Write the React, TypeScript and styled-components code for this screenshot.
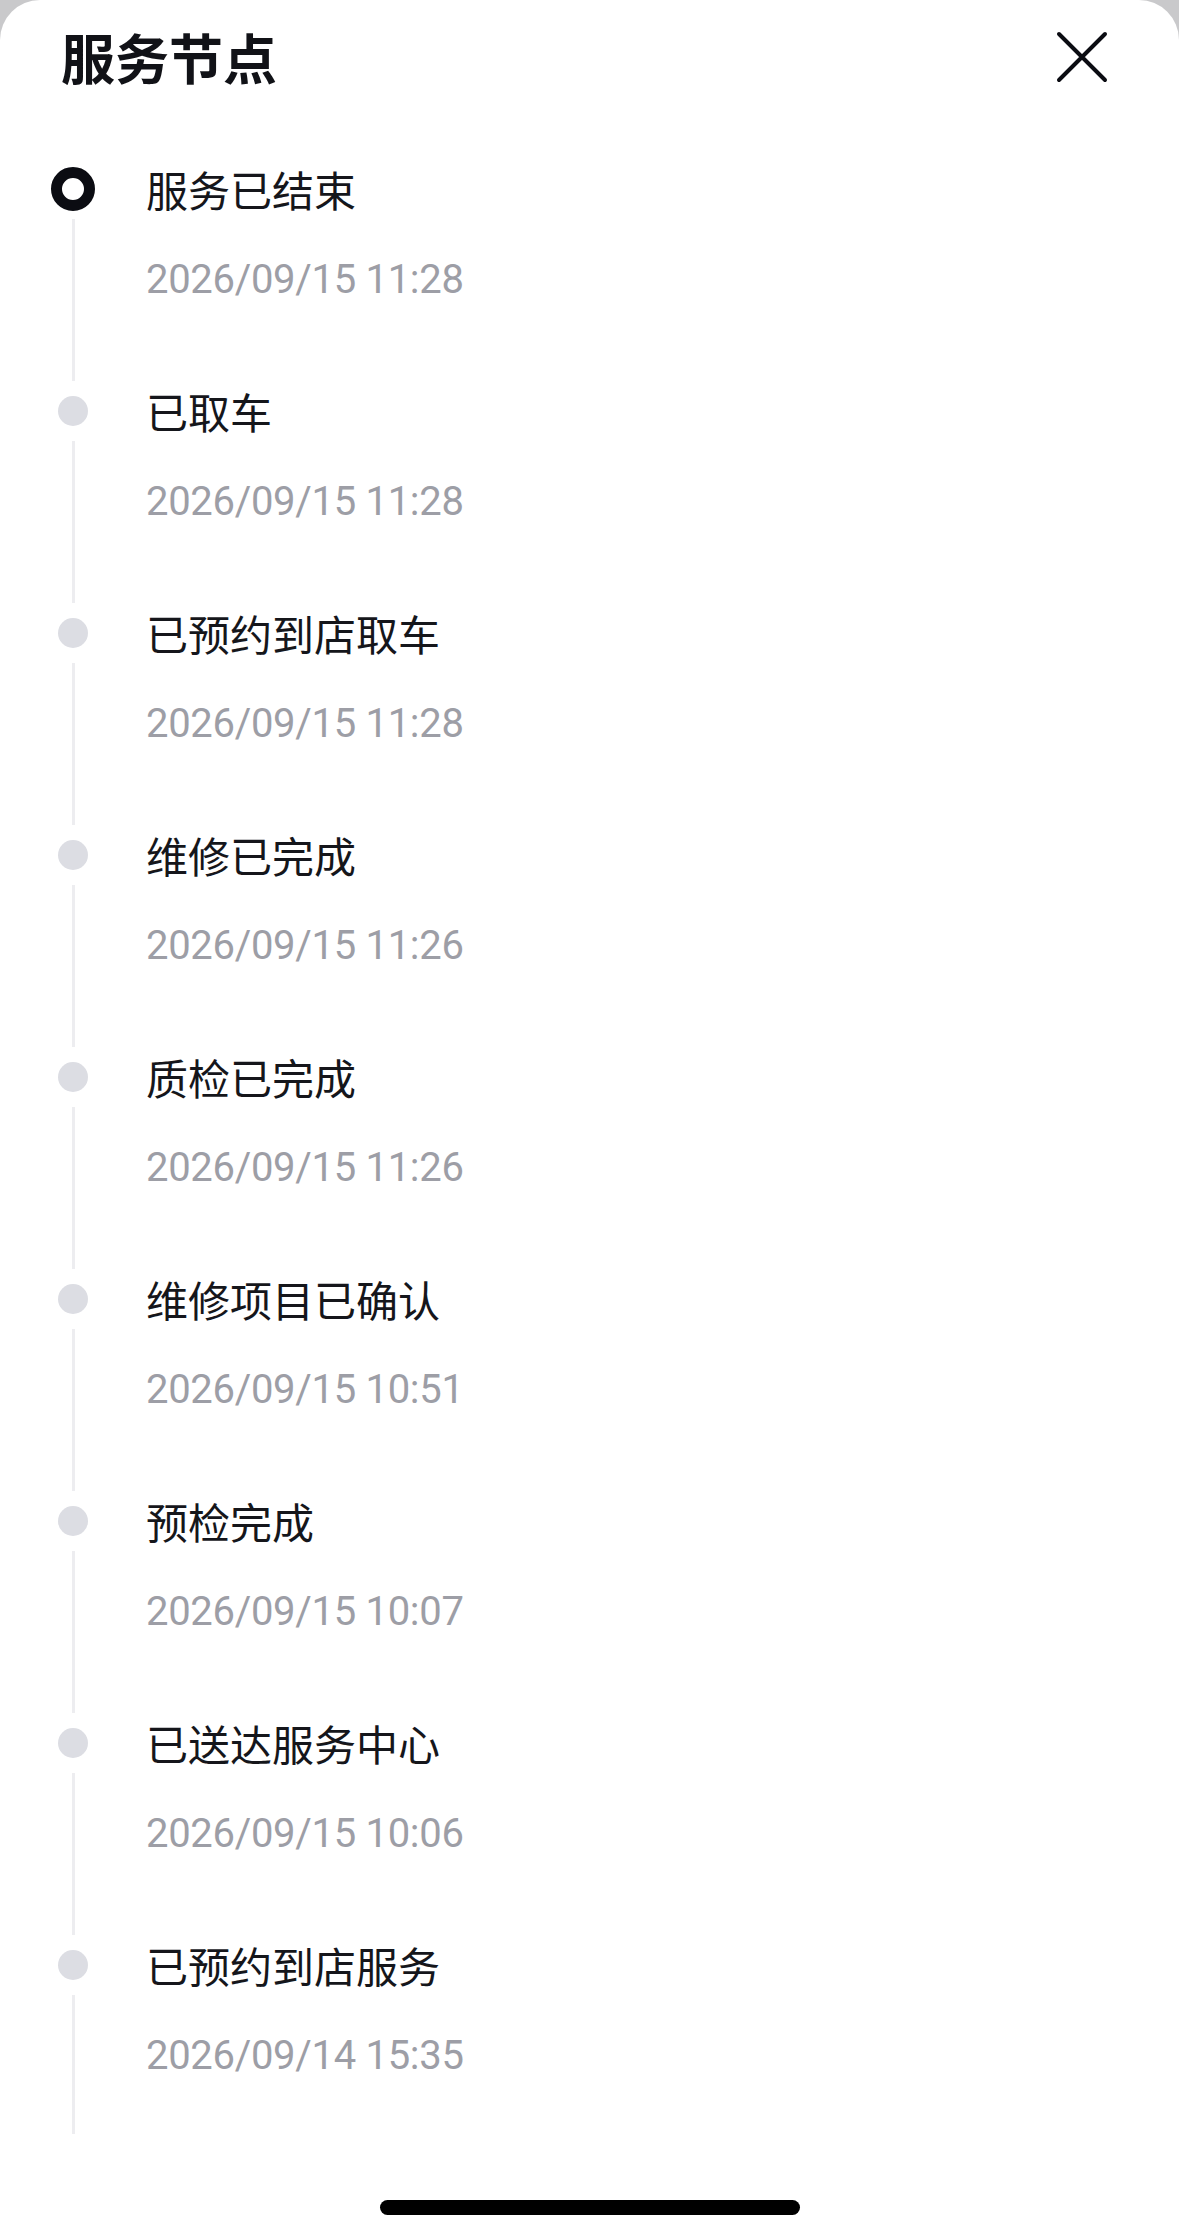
import React from 'react';
import styled, { createGlobalStyle } from 'styled-components';

const GlobalStyle = createGlobalStyle`
  html, body {
    margin: 0;
    padding: 0;
    background: #c9c9cb;
  }
  * {
    box-sizing: border-box;
  }
`;

const Sheet = styled.div`
  width: 1179px;
  height: 2239px;
  background: #ffffff;
  border-radius: 40px 40px 0 0;
  display: flex;
  flex-direction: column;
  font-family: "Noto Sans CJK SC", "Noto Sans", sans-serif;
  overflow: hidden;
`;

const Header = styled.header`
  height: 114px;
  padding: 0 67px 0 61px;
  display: flex;
  align-items: center;
  justify-content: space-between;
`;

const Title = styled.h1`
  margin: 0;
  font-size: 54px;
  line-height: 60px;
  font-weight: 700;
  color: #111217;
`;

const CloseButton = styled.button`
  width: 60px;
  height: 60px;
  padding: 0;
  border: none;
  background: none;
  display: flex;
  align-items: center;
  justify-content: center;
`;

const List = styled.ul`
  list-style: none;
  margin: 45px 0 0;
  padding: 0;
`;

const Item = styled.li<{ $height: number }>`
  display: grid;
  grid-template-columns: 146px 1fr;
  height: ${(p) => p.$height}px;
`;

const Rail = styled.div`
  display: flex;
  flex-direction: column;
  align-items: center;
`;

const MarkerBox = styled.div`
  height: 60px;
  display: flex;
  align-items: center;
  justify-content: center;
`;

const Marker = styled.span<{ $active?: boolean }>`
  display: block;
  border-radius: 50%;
  ${(p) =>
    p.$active
      ? `width: 44px; height: 44px; border: 11px solid #0b0c12; background: #fff;`
      : `width: 30px; height: 30px; background: #dcdde3;`}
`;

const Segment = styled.div`
  flex: 1;
  width: 3px;
  background: #ededf0;
`;

const Content = styled.div`
  display: flex;
  flex-direction: column;
`;

const Name = styled.div`
  font-size: 42px;
  line-height: 60px;
  color: #15161b;
`;

const Time = styled.div`
  margin-top: 31px;
  font-family: Roboto, "Noto Sans", sans-serif;
  font-size: 40px;
  line-height: 60px;
  color: #9d9ea6;
  letter-spacing: -0.3px;
`;

const Footer = styled.div`
  flex: 1;
  display: flex;
  justify-content: center;
  align-items: flex-end;
  padding-bottom: 24px;
`;

const HomeBar = styled.div`
  width: 420px;
  height: 15px;
  border-radius: 8px;
  background: #000;
`;

const nodes = [
  { name: '服务已结束', time: '2026/09/15 11:28' },
  { name: '已取车', time: '2026/09/15 11:28' },
  { name: '已预约到店取车', time: '2026/09/15 11:28' },
  { name: '维修已完成', time: '2026/09/15 11:26' },
  { name: '质检已完成', time: '2026/09/15 11:26' },
  { name: '维修项目已确认', time: '2026/09/15 10:51' },
  { name: '预检完成', time: '2026/09/15 10:07' },
  { name: '已送达服务中心', time: '2026/09/15 10:06' },
  { name: '已预约到店服务', time: '2026/09/14 15:35' },
];

export default function App() {
  return (
    <>
      <GlobalStyle />
      <Sheet>
        <Header>
          <Title>服务节点</Title>
          <CloseButton aria-label="关闭">
            <svg width="54" height="54" viewBox="0 0 54 54">
              <path
                d="M4 4 L50 50 M50 4 L4 50"
                stroke="#0b0c12"
                strokeWidth="4"
                strokeLinecap="round"
              />
            </svg>
          </CloseButton>
        </Header>
        <List>
          {nodes.map((n, i) => (
            <Item key={i} $height={i === nodes.length - 1 ? 199 : 222}>
              <Rail>
                <MarkerBox>
                  <Marker $active={i === 0} />
                </MarkerBox>
                <Segment />
              </Rail>
              <Content>
                <Name>{n.name}</Name>
                <Time>{n.time}</Time>
              </Content>
            </Item>
          ))}
        </List>
        <Footer>
          <HomeBar />
        </Footer>
      </Sheet>
    </>
  );
}
